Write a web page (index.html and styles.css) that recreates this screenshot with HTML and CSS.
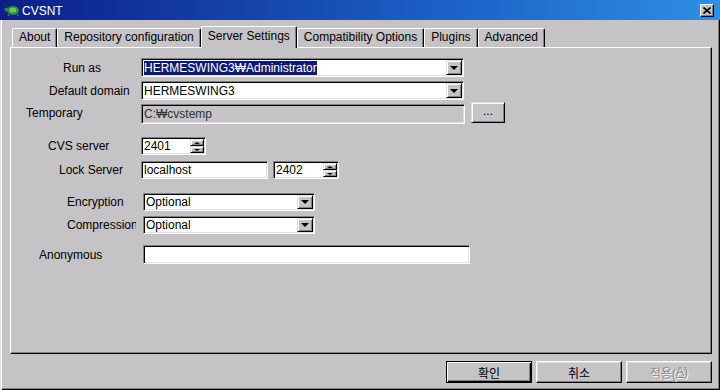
FILE: index.html
```html
<!DOCTYPE html>
<html lang="ko">

<head>
    <meta charset="UTF-8">
    <title>CVSNT</title>
    <link rel="stylesheet" href="styles.css">
</head>

<body>
    <div class="window">
        <!-- Title bar -->
        <div class="titlebar">
            <svg class="app-icon" width="16" height="12" viewBox="0 0 16 12">
                <ellipse cx="9" cy="6.5" rx="6" ry="4.5" fill="#2f8a3c"/>
                <ellipse cx="9" cy="6" rx="3.5" ry="2.5" fill="#6cc46a"/>
                <circle cx="2.5" cy="5.5" r="2" fill="#2f8a3c"/>
                <path d="M5 10.5l-1 1.5M13 10.5l1 1.5" stroke="#2f8a3c" stroke-width="1.5"/>
            </svg>
            <span class="title">CVSNT</span>
            <span class="close-btn">
                <svg width="8" height="7" viewBox="0 0 8 7">
                    <path d="M0.5 0.5l7 6M7.5 0.5l-7 6" stroke="#000" stroke-width="1.6"/>
                </svg>
            </span>
        </div>

        <!-- Tabs -->
        <div class="tabs">
            <div class="tab">About</div>
            <div class="tab">Repository configuration</div>
            <div class="tab active">Server Settings</div>
            <div class="tab">Compatibility Options</div>
            <div class="tab">Plugins</div>
            <div class="tab">Advanced</div>
        </div>

        <!-- Server settings page -->
        <div class="pane">
            <div class="row row-runas">
                <label class="lbl">Run as</label>
                <div class="field combo combo-wide">
                    <span class="value"><span class="selected">HERMESWING3₩Administrator</span></span>
                    <span class="drop"></span>
                </div>
            </div>

            <div class="row row-domain">
                <label class="lbl">Default domain</label>
                <div class="field combo combo-wide">
                    <span class="value">HERMESWING3</span>
                    <span class="drop"></span>
                </div>
            </div>

            <div class="row row-temp">
                <label class="lbl">Temporary</label>
                <div class="field field-disabled temp-input">
                    <span class="value">C:₩cvstemp</span>
                </div>
                <span class="browse-btn">...</span>
            </div>

            <div class="row row-cvs">
                <label class="lbl">CVS server</label>
                <div class="field spinbox">
                    <span class="value">2401</span>
                    <span class="spin"><span class="up"></span><span class="down"></span></span>
                </div>
            </div>

            <div class="row row-lock">
                <label class="lbl">Lock Server</label>
                <div class="field host-input">
                    <span class="value">localhost</span>
                </div>
                <div class="field spinbox port">
                    <span class="value">2402</span>
                    <span class="spin"><span class="up"></span><span class="down"></span></span>
                </div>
            </div>

            <div class="row row-enc">
                <label class="lbl">Encryption</label>
                <div class="field combo combo-small">
                    <span class="value">Optional</span>
                    <span class="drop"></span>
                </div>
            </div>

            <div class="row row-comp">
                <label class="lbl">Compression</label>
                <div class="field combo combo-small">
                    <span class="value">Optional</span>
                    <span class="drop"></span>
                </div>
            </div>

            <div class="row row-anon">
                <label class="lbl">Anonymous</label>
                <div class="field anon-input">
                    <span class="value"></span>
                </div>
            </div>
        </div>

        <!-- Dialog buttons -->
        <div class="buttons">
            <span class="btn default">확인</span>
            <span class="btn">취소</span>
            <span class="btn disabled">적용(<u>A</u>)</span>
        </div>
    </div>
</body>

</html>
```

FILE: styles.css
```css
/* Basic styling */
* {
    box-sizing: border-box;
}

body {
    margin: 0;
    font-family: "Liberation Sans", "Noto Sans CJK KR", sans-serif;
    font-size: 12px;
    color: #000;
    background: #c6c3c6;
}

.window {
    width: 720px;
    height: 390px;
    padding: 0 2px 2px 2px;
    background: #c6c3c6;
    box-shadow: inset 1px 0 0 #dfdfdf, inset 2px 0 0 #fff, inset -1px -1px 0 #000, inset -2px -2px 0 #808080;
    display: flex;
    flex-direction: column;
    overflow: hidden;
}

/* Title bar */
.titlebar {
    height: 20px;
    margin: 0 -2px;
    padding: 0 6px 0 4px;
    display: flex;
    align-items: center;
    background: linear-gradient(to right, #0c1f88, #1b5fc4 60%, #2e8ee6);
    color: #fff;
}

.app-icon {
    margin-right: 2px;
}

.title {
    flex: 1;
    font-size: 12px;
    padding-top: 1px;
}

.close-btn {
    width: 14px;
    height: 13px;
    display: flex;
    align-items: center;
    justify-content: center;
    background: #c6c3c6;
    border: 1px solid;
    border-color: #fff #000 #000 #fff;
    box-shadow: inset -1px -1px 0 #808080;
}

/* Tabs */
.tabs {
    height: 21px;
    margin-top: 6px;
    padding-left: 10px;
    display: flex;
    align-items: flex-end;
}

.tab {
    height: 19px;
    padding: 0 6px;
    line-height: 17px;
    white-space: nowrap;
    background: #c6c3c6;
    border-top: 1px solid #fff;
    border-left: 1px solid #fff;
    border-right: 1px solid #000;
    border-radius: 2px 2px 0 0;
    box-shadow: inset -1px 0 0 #808080;
}

.tab.active {
    height: 22px;
    margin-bottom: -1px;
    line-height: 18px;
    position: relative;
}

/* Tab page */
.pane {
    height: 307px;
    margin: 0 6px 0 8px;
    border: 1px solid;
    border-color: #fff #000 #000 #fff;
    box-shadow: inset -1px -1px 0 #808080;
}

.row {
    display: flex;
    align-items: center;
}

.lbl {
    flex: none;
    width: 130px;
    white-space: nowrap;
    overflow: hidden;
}

.row-runas { margin-top: 10px; height: 19px; }
.row-domain { margin-top: 4px; height: 19px; }
.row-temp { margin-top: 2px; height: 22px; align-items: flex-start; }
.row-cvs { margin-top: 13px; height: 18px; }
.row-lock { margin-top: 6px; height: 18px; }
.row-enc { margin-top: 14px; height: 18px; }
.row-comp { margin-top: 5px; height: 18px; }
.row-anon { margin-top: 11px; height: 19px; }

.row-runas .lbl { padding-left: 52px; }
.row-domain .lbl { padding-left: 38px; }
.row-temp .lbl { padding-left: 15px; line-height: 22px; }
.row-cvs .lbl { padding-left: 37px; }
.row-lock .lbl { padding-left: 48px; }
.row-enc .lbl { padding-left: 56px; width: 132px; }
.row-comp .lbl { padding-left: 56px; width: 125px; margin-right: 7px; }
.row-anon .lbl { padding-left: 28px; width: 132px; }

/* Sunken edit fields */
.field {
    height: 100%;
    padding: 1px;
    display: flex;
    align-items: center;
    background: #fff;
    border: 1px solid;
    border-color: #808080 #fff #fff #808080;
    box-shadow: inset 1px 1px 0 #000, inset -1px -1px 0 #dfdfdf;
}

.field .value {
    flex: 1;
    padding-left: 1px;
    white-space: nowrap;
    overflow: hidden;
}

.field-disabled {
    background: #c6c3c6;
    color: #303030;
}

.selected {
    background: #0e1a70;
    color: #fff;
}

.combo-wide { width: 323px; }
.combo-small { width: 172px; }
.temp-input { width: 324px; height: 20px; margin-top: 2px; }
.host-input { width: 127px; }
.spinbox { width: 65px; }
.port { width: 66px; margin-left: 5px; }
.anon-input { width: 327px; }

/* Raised little buttons */
.drop,
.spin span,
.browse-btn {
    background: #c6c3c6;
    border: 1px solid;
    border-color: #dfdfdf #000 #000 #dfdfdf;
    box-shadow: inset 1px 1px 0 #fff, inset -1px -1px 0 #808080;
    display: flex;
    align-items: center;
    justify-content: center;
}

.drop {
    width: 16px;
    align-self: stretch;
}

.drop::after {
    content: "";
    border-left: 4px solid transparent;
    border-right: 4px solid transparent;
    border-top: 4px solid #000;
}

.spin {
    width: 14px;
    align-self: stretch;
    display: flex;
    flex-direction: column;
}

.spin span {
    flex: 1;
}

.spin .up::after,
.spin .down::after {
    content: "";
    border-left: 3px solid transparent;
    border-right: 3px solid transparent;
}

.spin .up::after { border-bottom: 2px solid #000; }
.spin .down::after { border-top: 2px solid #000; }

.browse-btn {
    width: 34px;
    height: 21px;
    margin-left: 6px;
    padding-bottom: 3px;
}

/* Dialog buttons */
.buttons {
    margin: 7px 6px 0 0;
    display: flex;
    justify-content: flex-end;
    gap: 4px;
}

.btn {
    width: 86px;
    height: 22px;
    display: flex;
    align-items: center;
    justify-content: center;
    font-size: 12px;
    background: #c6c3c6;
    border: 1px solid;
    border-color: #fff #000 #000 #fff;
    box-shadow: inset -1px -1px 0 #808080, inset 1px 1px 0 #dfdfdf;
}

.btn.default {
    border-color: #000;
    box-shadow: inset 1px 1px 0 #fff, inset -1px -1px 0 #000, inset -2px -2px 0 #808080;
}

.btn.disabled {
    color: #8a888a;
    text-shadow: 1px 1px 0 #fff;
}
```
